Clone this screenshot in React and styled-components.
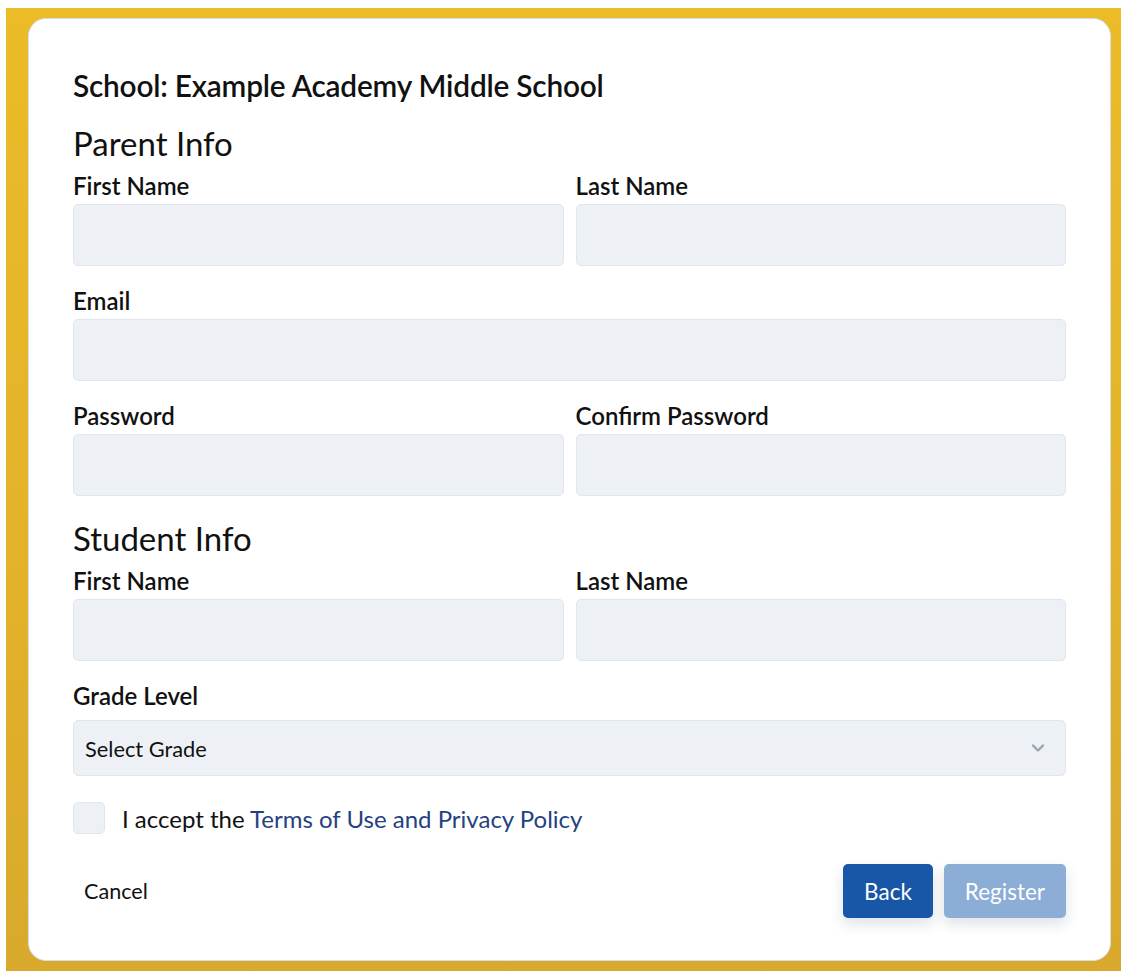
import styled, { createGlobalStyle } from "styled-components";

const GlobalStyle = createGlobalStyle`
  * {
    box-sizing: border-box;
  }

  body {
    margin: 0;
    background: #ffffff;
    font-family: Lato, "Open Sans", "Liberation Sans", sans-serif;
    color: #111111;
  }
`;

const Frame = styled.div`
  margin: 8px 0 0 6px;
  height: 963px;
  padding: 10px 10px 10px 22px;
  background: linear-gradient(180deg, #ebbb28 0%, #e3b22a 60%, #d8a92c 100%);
  display: flex;
`;

const Card = styled.main`
  flex: 1;
  display: flex;
  flex-direction: column;
  background: #ffffff;
  border: 1px solid #d5deea;
  border-radius: 18px;
  padding: 50px 44px 0 44px;
`;

const SchoolTitle = styled.h1`
  margin: 0;
  font-size: 29.8px;
  line-height: 34px;
  font-weight: 600;
  letter-spacing: -0.2px;
`;

const SectionTitle = styled.h2`
  margin: ${(p) => (p.$first ? "20px" : "22px")} 0 10px;
  font-size: 33px;
  line-height: 40px;
  font-weight: 400;
`;

const Row = styled.div`
  display: grid;
  grid-template-columns: ${(p) => (p.$cols === 2 ? "1fr 1fr" : "1fr")};
  column-gap: 12px;
  margin-top: ${(p) => (p.$spaced ? "22px" : "0")};
`;

const Field = styled.div`
  display: flex;
  flex-direction: column;
`;

const Label = styled.label`
  font-size: 24px;
  line-height: 26px;
  font-weight: 600;
  margin-bottom: ${(p) => (p.$select ? "11px" : "5px")};
`;

const Input = styled.input`
  height: 62px;
  background: #edf1f6;
  border: 1px solid #dfe6ee;
  border-radius: 5px;
  padding: 0 12px;
  font: inherit;
  font-size: 22px;
  outline: none;
`;

const SelectBox = styled.div`
  position: relative;
  height: 56px;
  display: flex;
  align-items: center;
  background: #edf1f6;
  border: 1px solid #dfe6ee;
  border-radius: 5px;
  padding: 0 11px;
  font-size: 21.8px;
  color: #111111;
`;

const Chevron = styled.svg`
  position: absolute;
  right: 20px;
  top: 50%;
  transform: translateY(-50%);
`;

const AcceptRow = styled.div`
  display: flex;
  align-items: center;
  gap: 17px;
  margin-top: 26px;
  font-size: 24px;
`;

const Checkbox = styled.span`
  width: 32px;
  height: 32px;
  flex-shrink: 0;
  border-radius: 5px;
  background: #edf1f6;
  border: 1px solid #dfe6ee;
`;

const Link = styled.a`
  color: #25417f;
  text-decoration: none;
`;

const Footer = styled.div`
  display: flex;
  align-items: center;
  justify-content: space-between;
  margin-top: 30px;
`;

const CancelButton = styled.button`
  background: none;
  border: none;
  padding: 0 0 0 11px;
  font: inherit;
  font-size: 21.6px;
  color: #111111;
  cursor: pointer;
`;

const Actions = styled.div`
  display: flex;
  gap: 11px;
`;

const Button = styled.button`
  height: 54px;
  padding: 0 21px;
  border: none;
  border-radius: 5px;
  font: inherit;
  font-size: 22.5px;
  color: #ffffff;
  background: ${(p) => (p.$disabled ? "#8badd6" : "#1856a7")};
  box-shadow: 0 6px 14px rgba(20, 40, 80, 0.14);
  cursor: ${(p) => (p.$disabled ? "default" : "pointer")};
`;

function TextField({ label }) {
  return (
    <Field>
      <Label>{label}</Label>
      <Input type="text" />
    </Field>
  );
}

export default function App() {
  return (
    <>
      <GlobalStyle />
      <Frame>
        <Card>
          <SchoolTitle>School: Example Academy Middle School</SchoolTitle>

          <SectionTitle $first>Parent Info</SectionTitle>
          <Row $cols={2}>
            <TextField label="First Name" />
            <TextField label="Last Name" />
          </Row>
          <Row $spaced>
            <TextField label="Email" />
          </Row>
          <Row $cols={2} $spaced>
            <TextField label="Password" />
            <TextField label="Confirm Password" />
          </Row>

          <SectionTitle>Student Info</SectionTitle>
          <Row $cols={2}>
            <TextField label="First Name" />
            <TextField label="Last Name" />
          </Row>
          <Row $spaced>
            <Field>
              <Label $select>Grade Level</Label>
              <SelectBox>
                Select Grade
                <Chevron width="14" height="9" viewBox="0 0 14 9">
                  <polyline
                    points="2,2 7,7 12,2"
                    fill="none"
                    stroke="#9aa3b6"
                    strokeWidth="2.4"
                    strokeLinecap="round"
                    strokeLinejoin="round"
                  />
                </Chevron>
              </SelectBox>
            </Field>
          </Row>

          <AcceptRow>
            <Checkbox />
            <span>
              I accept the <Link href="#">Terms of Use and Privacy Policy</Link>
            </span>
          </AcceptRow>

          <Footer>
            <CancelButton>Cancel</CancelButton>
            <Actions>
              <Button>Back</Button>
              <Button $disabled>Register</Button>
            </Actions>
          </Footer>
        </Card>
      </Frame>
    </>
  );
}
